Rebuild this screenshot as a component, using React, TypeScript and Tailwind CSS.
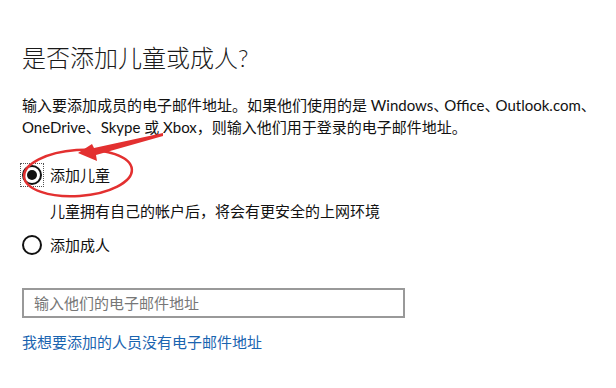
import React from 'react';

const font = "font-['Lato','Noto_Sans_CJK_SC',sans-serif]";

const Radio: React.FC<{ checked?: boolean; focused?: boolean; label: string }> = ({ checked, focused, label }) => (
    <div className="flex items-center h-6">
        <span className={`flex items-center justify-center w-[24px] h-[24px] -ml-[2px] mr-[6px] ${focused ? 'outline-1 outline-dotted outline-[#555] -outline-offset-1' : ''}`}>
            <span className="flex items-center justify-center w-[20px] h-[20px] rounded-full border-2 border-[#111]">
                {checked && <span className="w-[10px] h-[10px] rounded-full bg-[#111]" />}
            </span>
        </span>
        <span className="text-[15px] text-[#111]">{label}</span>
    </div>
);

// half-width enumeration comma, as the dialog renders it between Latin words
const Dun = () => <span className="tracking-[-4px]">、</span>;

export default function App() {
    return (
        <div className={`relative w-[616px] h-[388px] bg-white overflow-hidden ${font}`}>
            <div className="flex flex-col pl-[22px] pt-[42px]">
                <h1 className="text-[24px] leading-[32px] font-light text-[#1a1a1a]">是否添加儿童或成人?</h1>
                <p className="mt-[20px] text-[15px] leading-[22px] text-[#111]">
                    输入要添加成员的电子邮件地址。如果他们使用的是 Windows<Dun />Office<Dun />Outlook.com<Dun />
                    <br />
                    OneDrive、Skype 或 Xbox，则输入他们用于登录的电子邮件地址。
                </p>
                <div className="mt-[25px]">
                    <Radio checked focused label="添加儿童" />
                </div>
                <p className="mt-[14px] ml-[28px] text-[15px] leading-[20px] text-[#111]">儿童拥有自己的帐户后，将会有更安全的上网环境</p>
                <div className="mt-[12px]">
                    <Radio label="添加成人" />
                </div>
                <div className="mt-[31px] w-[383px] h-[30px] border-2 border-[#999] flex items-center px-[10px]">
                    <span className="text-[15px] text-[#777]">输入他们的电子邮件地址</span>
                </div>
                <a className="mt-[14px] text-[15px] leading-[20px] text-[#1a64b0]">我想要添加的人员没有电子邮件地址</a>
            </div>
            <svg className="absolute left-0 top-0 pointer-events-none" width="616" height="388" viewBox="0 0 616 388">
                <ellipse cx="78" cy="173" rx="54" ry="23" transform="rotate(-4 78 173)" fill="none" stroke="#e33030" strokeWidth="2.5" />
                <polygon points="78,153 92,144 94,148 163,133 163,136 96,155 97,161" fill="#e33030" />
            </svg>
        </div>
    );
}
